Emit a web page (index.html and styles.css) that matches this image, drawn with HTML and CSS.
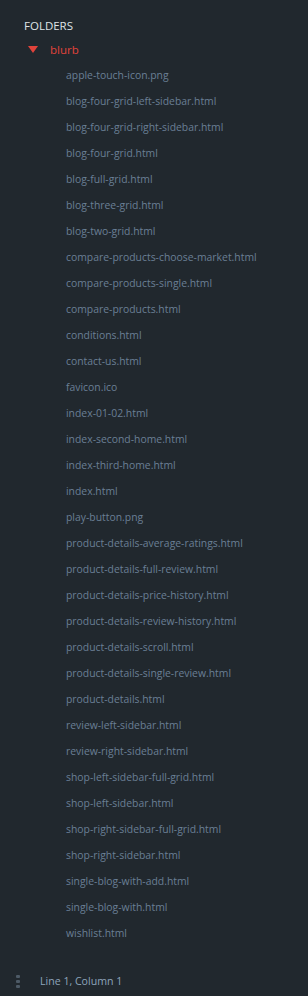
FILE: index.html
```html
<!DOCTYPE html>
<html lang="en">
<head>
  <meta charset="UTF-8" />
  <title>Sidebar</title>
  <link rel="stylesheet" href="styles.css">
</head>
<body>
  <aside class="sidebar">
    <div class="folders-title">FOLDERS</div>
    <div class="folder">
      <span class="caret"></span>
      <span class="folder-name">blurb</span>
    </div>
    <ul class="files">
      <li>apple-touch-icon.png</li>
      <li>blog-four-grid-left-sidebar.html</li>
      <li>blog-four-grid-right-sidebar.html</li>
      <li>blog-four-grid.html</li>
      <li>blog-full-grid.html</li>
      <li>blog-three-grid.html</li>
      <li>blog-two-grid.html</li>
      <li>compare-products-choose-market.html</li>
      <li>compare-products-single.html</li>
      <li>compare-products.html</li>
      <li>conditions.html</li>
      <li>contact-us.html</li>
      <li>favicon.ico</li>
      <li>index-01-02.html</li>
      <li>index-second-home.html</li>
      <li>index-third-home.html</li>
      <li>index.html</li>
      <li>play-button.png</li>
      <li>product-details-average-ratings.html</li>
      <li>product-details-full-review.html</li>
      <li>product-details-price-history.html</li>
      <li>product-details-review-history.html</li>
      <li>product-details-scroll.html</li>
      <li>product-details-single-review.html</li>
      <li>product-details.html</li>
      <li>review-left-sidebar.html</li>
      <li>review-right-sidebar.html</li>
      <li>shop-left-sidebar-full-grid.html</li>
      <li>shop-left-sidebar.html</li>
      <li>shop-right-sidebar-full-grid.html</li>
      <li>shop-right-sidebar.html</li>
      <li>single-blog-with-add.html</li>
      <li>single-blog-with.html</li>
      <li>wishlist.html</li>
    </ul>
  </aside>

  <footer class="status-bar">
    <span class="dots"><i></i><i></i><i></i></span>
    <span class="status-text">Line 1, Column 1</span>
  </footer>
</body>
</html>
```

FILE: styles.css
```css
:root {
  --bg-color: #21282e;
  --title-color: #dfe3e6;
  --folder-color: #e0433b;
  --file-color: #6a7f95;
  --status-color: #8da4bb;
}

html, body {
  height: 100%;
}

body {
  margin: 0;
  background-color: var(--bg-color);
  font-family: 'Open Sans', 'Noto Sans', sans-serif;
  font-size: 10.4px;
  display: flex;
  flex-direction: column;
}

.sidebar {
  flex-grow: 1;
  padding-top: 16px;
}

.folders-title {
  height: 20px;
  line-height: 20px;
  padding-left: 24px;
  font-size: 11.5px;
  color: var(--title-color);
}

.folder {
  display: flex;
  align-items: center;
  height: 26px;
  padding-left: 28px;
}

.caret {
  width: 0;
  height: 0;
  border-left: 5px solid transparent;
  border-right: 5px solid transparent;
  border-top: 7px solid var(--folder-color);
  margin-right: 12px;
}

.folder-name {
  color: var(--folder-color);
  font-size: 11.5px;
}

.files {
  list-style: none;
  margin: 0;
  padding: 0 0 0 66px;
}

.files li {
  height: 26px;
  line-height: 26px;
  color: var(--file-color);
  white-space: nowrap;
}

.status-bar {
  height: 30px;
  display: flex;
  align-items: center;
  padding-left: 16px;
  flex-shrink: 0;
}

.dots {
  display: flex;
  flex-direction: column;
  gap: 2px;
  margin-right: 20px;
}

.dots i {
  width: 4px;
  height: 3px;
  border-radius: 1px;
  background-color: #4d5a66;
}

.status-text {
  color: var(--status-color);
  font-size: 10.6px;
}
```
